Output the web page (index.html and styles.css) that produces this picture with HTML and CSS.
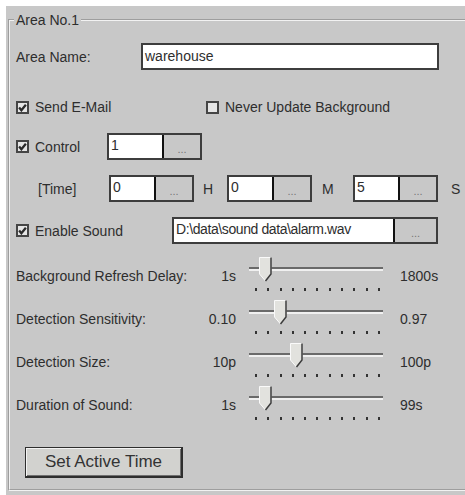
FILE: index.html
```html
<!DOCTYPE html>
<html lang="en">
<head>
    <meta charset="UTF-8">
    <title>Area No.1</title>
    <link rel="stylesheet" href="styles.css">
</head>
<body>

<div class="panel">
    <fieldset class="group">
        <legend>Area No.1</legend>

        <div class="row">
            <span class="name-label">Area Name:</span>
            <div class="field name-field">warehouse</div>
        </div>

        <div class="row row-check">
            <span class="check mail">
                <span class="box checked"><svg viewBox="0 0 8 8"><path d="M1 4 L3 6.5 L7 1.5"/></svg></span>
                Send E-Mail
            </span>
            <span class="check">
                <span class="box"></span>
                Never Update Background
            </span>
        </div>

        <div class="row row-field">
            <span class="check control">
                <span class="box checked"><svg viewBox="0 0 8 8"><path d="M1 4 L3 6.5 L7 1.5"/></svg></span>
                Control
            </span>
            <div class="combo control-combo">
                <span class="value">1</span>
                <span class="more">...</span>
            </div>
        </div>

        <div class="row row-field">
            <span class="time-label">[Time]</span>
            <div class="combo time-combo">
                <span class="value">0</span>
                <span class="more">...</span>
            </div>
            <span class="unit">H</span>
            <div class="combo time-combo">
                <span class="value">0</span>
                <span class="more">...</span>
            </div>
            <span class="unit wide">M</span>
            <div class="combo time-combo">
                <span class="value">5</span>
                <span class="more">...</span>
            </div>
            <span class="unit last">S</span>
        </div>

        <div class="row row-field">
            <span class="check sound">
                <span class="box checked"><svg viewBox="0 0 8 8"><path d="M1 4 L3 6.5 L7 1.5"/></svg></span>
                Enable Sound
            </span>
            <div class="combo sound-combo">
                <span class="value path">D:\data\sound data\alarm.wav</span>
                <span class="more">...</span>
            </div>
        </div>

        <div class="slider-row first">
            <span class="s-label">Background Refresh Delay:</span>
            <span class="s-min">1s</span>
            <div class="slider">
                <div class="track"></div>
                <div class="ticks"><i></i><i></i><i></i><i></i><i></i><i></i><i></i><i></i><i></i><i></i><i></i></div>
                <svg class="thumb" style="left: 10px" viewBox="0 0 13 25"><path class="thumb-face" d="M0.5 0.5 H12 V17 L6.5 24 L0.5 17 Z"/><path class="thumb-shade" d="M12 0.5 V17 L6.5 24"/></svg>
            </div>
            <span class="s-max">1800s</span>
        </div>

        <div class="slider-row">
            <span class="s-label">Detection Sensitivity:</span>
            <span class="s-min">0.10</span>
            <div class="slider">
                <div class="track"></div>
                <div class="ticks"><i></i><i></i><i></i><i></i><i></i><i></i><i></i><i></i><i></i><i></i><i></i></div>
                <svg class="thumb" style="left: 25px" viewBox="0 0 13 25"><path class="thumb-face" d="M0.5 0.5 H12 V17 L6.5 24 L0.5 17 Z"/><path class="thumb-shade" d="M12 0.5 V17 L6.5 24"/></svg>
            </div>
            <span class="s-max">0.97</span>
        </div>

        <div class="slider-row">
            <span class="s-label">Detection Size:</span>
            <span class="s-min">10p</span>
            <div class="slider">
                <div class="track"></div>
                <div class="ticks"><i></i><i></i><i></i><i></i><i></i><i></i><i></i><i></i><i></i><i></i><i></i></div>
                <svg class="thumb" style="left: 41px" viewBox="0 0 13 25"><path class="thumb-face" d="M0.5 0.5 H12 V17 L6.5 24 L0.5 17 Z"/><path class="thumb-shade" d="M12 0.5 V17 L6.5 24"/></svg>
            </div>
            <span class="s-max">100p</span>
        </div>

        <div class="slider-row">
            <span class="s-label">Duration of Sound:</span>
            <span class="s-min">1s</span>
            <div class="slider">
                <div class="track"></div>
                <div class="ticks"><i></i><i></i><i></i><i></i><i></i><i></i><i></i><i></i><i></i><i></i><i></i></div>
                <svg class="thumb" style="left: 10px" viewBox="0 0 13 25"><path class="thumb-face" d="M0.5 0.5 H12 V17 L6.5 24 L0.5 17 Z"/><path class="thumb-shade" d="M12 0.5 V17 L6.5 24"/></svg>
            </div>
            <span class="s-max">99s</span>
        </div>

        <button class="active-btn">Set Active Time</button>
    </fieldset>
</div>

</body>
</html>
```

FILE: styles.css
```css
body {
    margin: 0;
    background: #fff;
    font-family: "Liberation Sans", Arial, sans-serif;
    font-size: 14px;
    color: #2e2e2e;
}
.panel {
    margin: 6px 0 0 6px;
    width: 459px;
    height: 489px;
    box-sizing: border-box;
    padding: 6px 0 0 2px;
    background: #c8c8c8;
}
.group {
    margin: 0;
    width: 451px;
    height: 479px;
    box-sizing: border-box;
    border: 2px groove #f2f2f2;
    padding: 15px 0 0 6px;
}
.group legend {
    padding: 0 2px;
    margin-left: -2px;
    line-height: 16px;
}
.row {
    display: flex;
    align-items: center;
    height: 27px;
}
.row-check {
    margin-top: 27px;
    height: 20px;
}
.row-field {
    margin-top: 15px;
}
.row-check + .row-field {
    margin-top: 16px;
}
.name-label {
    width: 125px;
}
.field {
    height: 27px;
    box-sizing: border-box;
    border: 2px solid #3d3d3d;
    background: #fff;
    padding: 0 2px;
    line-height: 23px;
    white-space: nowrap;
}
.name-field {
    width: 298px;
}
.check {
    display: flex;
    align-items: center;
    gap: 6px;
}
.check.mail {
    width: 190px;
}
.check.control {
    width: 91px;
}
.check.sound {
    width: 156px;
}
.box {
    width: 13px;
    height: 13px;
    box-sizing: border-box;
    border: 2px solid #454545;
    background: #e6e6e6;
    display: flex;
}
.box svg {
    width: 9px;
    height: 9px;
    fill: none;
    stroke: #2a2a2a;
    stroke-width: 2;
}
.combo {
    display: flex;
    height: 27px;
    box-sizing: border-box;
    border: 2px solid #3d3d3d;
}
.combo .value {
    flex: 1;
    background: #fff;
    border-right: 2px solid #111;
    padding: 0 2px;
    line-height: 21px;
    white-space: nowrap;
    overflow: hidden;
}
.combo .path {
    letter-spacing: -0.4px;
}
.combo .more {
    background: #c8c8c8;
    color: #777;
    font-size: 11px;
    text-align: center;
    line-height: 28px;
}
.control-combo {
    width: 95px;
}
.control-combo .more,
.time-combo .more {
    width: 36px;
}
.time-combo {
    width: 85px;
}
.sound-combo {
    width: 266px;
}
.sound-combo .more {
    width: 41px;
}
.time-label {
    width: 93px;
    box-sizing: border-box;
    padding-left: 22px;
}
.unit {
    width: 33px;
    box-sizing: border-box;
    padding-left: 9px;
}
.unit.wide {
    width: 41px;
    padding-left: 10px;
}
.unit.last {
    padding-left: 13px;
}
.slider-row {
    display: flex;
    height: 34px;
    margin-top: 9px;
    line-height: 34px;
}
.slider-row.first {
    margin-top: 15px;
}
.s-label {
    width: 190px;
}
.s-min {
    width: 30px;
    text-align: right;
}
.slider {
    position: relative;
    width: 134px;
    margin-left: 13px;
}
.track {
    margin-top: 8px;
    height: 4px;
    background: linear-gradient(#6a6a6a 50%, #f0f0f0 50%);
}
.ticks {
    display: flex;
    justify-content: space-between;
    margin: 17px 3px 0 6px;
    height: 3px;
}
.ticks i {
    width: 2px;
    height: 3px;
    background: #333;
}
.thumb {
    position: absolute;
    top: -2px;
    width: 13px;
    height: 25px;
}
.thumb-face {
    fill: #e2e2de;
    stroke: #fafafa;
    stroke-width: 1;
}
.thumb-shade {
    fill: none;
    stroke: #3a3a3a;
    stroke-width: 1.5;
}
.s-max {
    margin-left: 17px;
}
.active-btn {
    display: block;
    margin: 25px 0 0 9px;
    width: 158px;
    height: 31px;
    font-family: "Liberation Sans", Arial, sans-serif;
    font-size: 17px;
    color: #333;
    background: #d2d2cf;
    border: 1px solid #2e2e2e;
    border-right-width: 2px;
    border-bottom-width: 2px;
    box-shadow: inset 1px 1px #f4f4f4, inset -1px -1px #707070;
}
```
